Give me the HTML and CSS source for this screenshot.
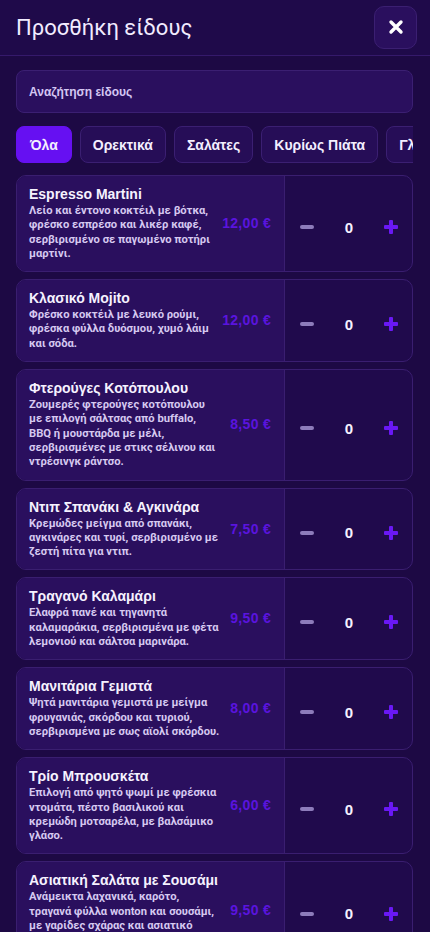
FILE: index.html
```html
<!DOCTYPE html>
<html lang="el">
<head>
<meta charset="utf-8">
<meta name="viewport" content="width=device-width, initial-scale=1">
<title>Προσθήκη είδους</title>
<link rel="stylesheet" href="styles.css">
</head>
<body>
<div class="modal">
  <header class="modal-header">
    <h1 class="modal-title">Προσθήκη είδους</h1>
    <button class="close-btn" aria-label="Κλείσιμο">
      <svg width="16" height="16" viewBox="0 0 16 16"><path d="M3 3 L13 13 M13 3 L3 13" stroke="#fff" stroke-width="3.4" stroke-linecap="round"/></svg>
    </button>
  </header>

  <div class="search">
    <span class="search-placeholder">Αναζήτηση είδους</span>
  </div>

  <nav class="tabs">
    <button class="tab active">Όλα</button>
    <button class="tab">Ορεκτικά</button>
    <button class="tab">Σαλάτες</button>
    <button class="tab">Κυρίως Πιάτα</button>
    <button class="tab">Γλυκά</button>
    <button class="tab">Ποτά</button>
  </nav>

  <div class="list">
    <div class="card">
      <div class="info">
        <div class="text">
          <div class="name">Espresso Martini</div>
          <div class="desc">Λείο και έντονο κοκτέιλ με βότκα,<br>φρέσκο εσπρέσο και λικέρ καφέ,<br>σερβιρισμένο σε παγωμένο ποτήρι<br>μαρτίνι.</div>
        </div>
        <div class="price">12,00 €</div>
      </div>
      <div class="qty">
        <span class="minus"></span><span class="count">0</span><span class="plus"></span>
      </div>
    </div>

    <div class="card">
      <div class="info">
        <div class="text">
          <div class="name">Κλασικό Mojito</div>
          <div class="desc">Φρέσκο κοκτέιλ με λευκό ρούμι,<br>φρέσκα φύλλα δυόσμου, χυμό λάιμ<br>και σόδα.</div>
        </div>
        <div class="price">12,00 €</div>
      </div>
      <div class="qty">
        <span class="minus"></span><span class="count">0</span><span class="plus"></span>
      </div>
    </div>

    <div class="card">
      <div class="info">
        <div class="text">
          <div class="name">Φτερούγες Κοτόπουλου</div>
          <div class="desc">Ζουμερές φτερούγες κοτόπουλου<br>με επιλογή σάλτσας από buffalo,<br>BBQ ή μουστάρδα με μέλι,<br>σερβιρισμένες με στικς σέλινου και<br>ντρέσινγκ ράντσο.</div>
        </div>
        <div class="price">8,50 €</div>
      </div>
      <div class="qty">
        <span class="minus"></span><span class="count">0</span><span class="plus"></span>
      </div>
    </div>

    <div class="card">
      <div class="info">
        <div class="text">
          <div class="name">Ντιπ Σπανάκι &amp; Αγκινάρα</div>
          <div class="desc">Κρεμώδες μείγμα από σπανάκι,<br>αγκινάρες και τυρί, σερβιρισμένο με<br>ζεστή πίτα για ντιπ.</div>
        </div>
        <div class="price">7,50 €</div>
      </div>
      <div class="qty">
        <span class="minus"></span><span class="count">0</span><span class="plus"></span>
      </div>
    </div>

    <div class="card">
      <div class="info">
        <div class="text">
          <div class="name">Τραγανό Καλαμάρι</div>
          <div class="desc">Ελαφρά πανέ και τηγανητά<br>καλαμαράκια, σερβιρισμένα με φέτα<br>λεμονιού και σάλτσα μαρινάρα.</div>
        </div>
        <div class="price">9,50 €</div>
      </div>
      <div class="qty">
        <span class="minus"></span><span class="count">0</span><span class="plus"></span>
      </div>
    </div>

    <div class="card">
      <div class="info">
        <div class="text">
          <div class="name">Μανιτάρια Γεμιστά</div>
          <div class="desc">Ψητά μανιτάρια γεμιστά με μείγμα<br>φρυγανιάς, σκόρδου και τυριού,<br>σερβιρισμένα με σως αϊολί σκόρδου.</div>
        </div>
        <div class="price">8,00 €</div>
      </div>
      <div class="qty">
        <span class="minus"></span><span class="count">0</span><span class="plus"></span>
      </div>
    </div>

    <div class="card">
      <div class="info">
        <div class="text">
          <div class="name">Τρίο Μπρουσκέτα</div>
          <div class="desc">Επιλογή από ψητό ψωμί με φρέσκια<br>ντομάτα, πέστο βασιλικού και<br>κρεμώδη μοτσαρέλα, με βαλσάμικο<br>γλάσο.</div>
        </div>
        <div class="price">6,00 €</div>
      </div>
      <div class="qty">
        <span class="minus"></span><span class="count">0</span><span class="plus"></span>
      </div>
    </div>

    <div class="card">
      <div class="info">
        <div class="text">
          <div class="name">Ασιατική Σαλάτα με Σουσάμι</div>
          <div class="desc">Ανάμεικτα λαχανικά, καρότο,<br>τραγανά φύλλα wonton και σουσάμι,<br>με γαρίδες σχάρας και ασιατικό<br>ντρέσινγκ.</div>
        </div>
        <div class="price">9,50 €</div>
      </div>
      <div class="qty">
        <span class="minus"></span><span class="count">0</span><span class="plus"></span>
      </div>
    </div>
  </div>
</div>
</body>
</html>
```

FILE: styles.css
```css
* { box-sizing: border-box; }

html, body {
  margin: 0;
  padding: 0;
  background: #1d0944;
  height: 100%;
  overflow: hidden;
}

body {
  font-family: "Liberation Sans", Arial, sans-serif;
  color: #f4efff;
}

.modal {
  width: 430px;
}

.modal-header {
  display: flex;
  align-items: center;
  justify-content: space-between;
  height: 56px;
  padding: 0 13px 0 16px;
  background: #1f0a4a;
  border-bottom: 1px solid #35196b;
}

.modal-title {
  margin: 0;
  font-family: Roboto, "Liberation Sans", sans-serif;
  font-size: 22px;
  font-weight: 400;
  color: #f2ecff;
}

.close-btn {
  width: 43px;
  height: 43px;
  display: flex;
  align-items: center;
  justify-content: center;
  background: #2a0f5e;
  border: 1px solid #3b1f72;
  border-radius: 10px;
  padding: 0;
  margin-top: -1px;
}

.search {
  margin: 14px 17px 0 16px;
  height: 43px;
  display: flex;
  align-items: center;
  padding: 0 12px;
  background: #2a0f5e;
  border: 1px solid #3b1f72;
  border-radius: 8px;
}

.search-placeholder {
  font-size: 12px;
  font-weight: 700;
  color: #d4c6f2;
}

.tabs {
  display: flex;
  gap: 8px;
  margin: 13px 17px 0 16px;
  overflow: hidden;
}

.tab {
  flex: none;
  height: 37px;
  padding: 0 12px;
  font-family: "Liberation Sans", Arial, sans-serif;
  font-size: 14px;
  font-weight: 700;
  color: #f4efff;
  background: #260d57;
  border: 1px solid #3b1f72;
  border-radius: 8px;
}

.tab.active {
  background: #6610f2;
  border-color: #6610f2;
  padding: 0 13px;
}

.list {
  display: flex;
  flex-direction: column;
  gap: 7px;
  margin-top: 12px;
  padding: 0 17px 0 16px;
}

.card {
  display: grid;
  grid-template-columns: 1fr 127px;
  border: 1px solid #3a1e70;
  border-radius: 10px;
  overflow: hidden;
  background: #200a4c;
}

.info {
  display: flex;
  align-items: center;
  padding: 9px 13px 10px 12px;
  background: #2a0f5e;
  border-right: 1px solid #3a1e70;
}

.text {
  flex: 1;
  min-width: 0;
}

.name {
  font-size: 14px;
  font-weight: 700;
  line-height: 19px;
  color: #f6f2ff;
}

.desc {
  font-family: Roboto, "Liberation Sans", sans-serif;
  font-size: 11.2px;
  font-weight: 700;
  line-height: 14.3px;
  white-space: nowrap;
  color: #d6c9f0;
}

.price {
  flex: none;
  min-width: 48px;
  text-align: right;
  font-size: 14px;
  font-weight: 700;
  letter-spacing: 0.3px;
  color: #5a14de;
  white-space: nowrap;
}

.qty {
  display: flex;
  align-items: center;
  justify-content: space-between;
  padding: 7px 14px 0 15px;
}

.minus {
  width: 14px;
  height: 4px;
  border-radius: 2px;
  background: #8d7cbb;
}

.count {
  font-size: 15px;
  font-weight: 700;
  color: #f6f2ff;
}

.plus {
  position: relative;
  width: 14px;
  height: 14px;
}

.plus::before,
.plus::after {
  content: "";
  position: absolute;
  background: #6a18f5;
  border-radius: 1px;
}

.plus::before {
  left: 0;
  top: 5px;
  width: 14px;
  height: 4px;
}

.plus::after {
  left: 5px;
  top: 0;
  width: 4px;
  height: 14px;
}
```
